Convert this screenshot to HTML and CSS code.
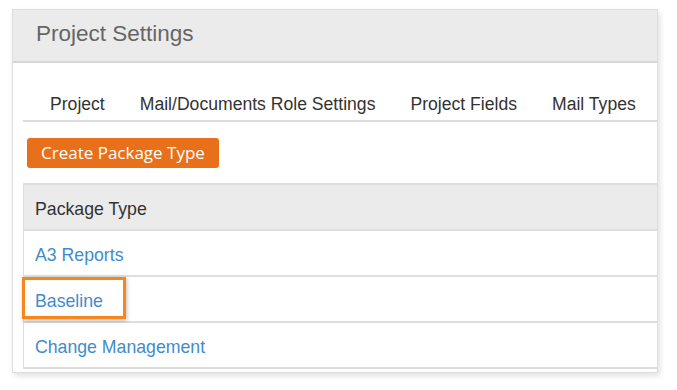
FILE: index.html
```html
<html>
<head>
    <meta charset="UTF-8">
    <title>Project Settings</title>
    <link rel="stylesheet" href="styles.css">
</head>
<body>
    <div class="panel">
        <div class="panel-heading">Project Settings</div>
        <div class="panel-body">
            <ul class="tabs">
                <li>Project</li>
                <li>Mail/Documents Role Settings</li>
                <li>Project Fields</li>
                <li>Mail Types</li>
            </ul>
            <button class="btn-create">Create Package Type</button>
            <table class="grid">
                <tr><th>Package Type</th></tr>
                <tr><td><a href="#">A3 Reports</a></td></tr>
                <tr><td class="marked"><a href="#">Baseline</a><span class="callout"></span></td></tr>
                <tr><td><a href="#">Change Management</a></td></tr>
            </table>
        </div>
    </div>
</body>
</html>
```
FILE: styles.css
```css
body {
    margin: 0;
    background: #ffffff;
    font-family: "Liberation Sans", Arial, sans-serif;
}

.panel {
    margin: 9px 0 0 12px;
    width: 644px;
    height: 362px;
    border: 1px solid #dedede;
    box-shadow: 2px 3px 6px rgba(0, 0, 0, 0.12);
    background: #ffffff;
}

.panel-heading {
    height: 51px;
    line-height: 48px;
    padding-left: 23px;
    background: #ebebeb;
    border-bottom: 2px solid #d6d6d6;
    font-size: 22.5px;
    color: #666666;
}

.panel-body {
    padding-left: 10px;
}

.tabs {
    display: flex;
    margin: 0;
    padding: 20px 0 0 10px;
    list-style: none;
    border-bottom: 2px solid #dddddd;
}

.tabs li {
    padding: 11px 17px 6px;
    margin-right: 1px;
    line-height: 20px;
    font-size: 17.6px;
    color: #333333;
}

.btn-create {
    margin: 16px 0 0 4px;
    height: 30px;
    padding: 0 14px 1px;
    background: #e8701a;
    color: #ffffff;
    border: none;
    border-radius: 3px;
    font-family: "Open Sans", "Liberation Sans", sans-serif;
    font-size: 17px;
}

.grid {
    width: 100%;
    margin-top: 15px;
    border-collapse: collapse;
    border-left: 1px solid #dddddd;
}

.grid th,
.grid td {
    height: 46px;
    padding: 4px 11px 0;
    text-align: left;
    font-size: 17.7px;
    font-weight: normal;
    border-top: 2px solid #dddddd;
    border-bottom: 2px solid #dddddd;
}

.grid th {
    background: #ebebeb;
    color: #333333;
}

.grid a {
    color: #3f8ccc;
    text-decoration: none;
}

.marked {
    position: relative;
}

.callout {
    position: absolute;
    left: -2px;
    top: 0;
    width: 98px;
    height: 36px;
    border: 3px solid #f7861c;
    box-shadow: 1px 2px 4px rgba(0, 0, 0, 0.25);
}
```
